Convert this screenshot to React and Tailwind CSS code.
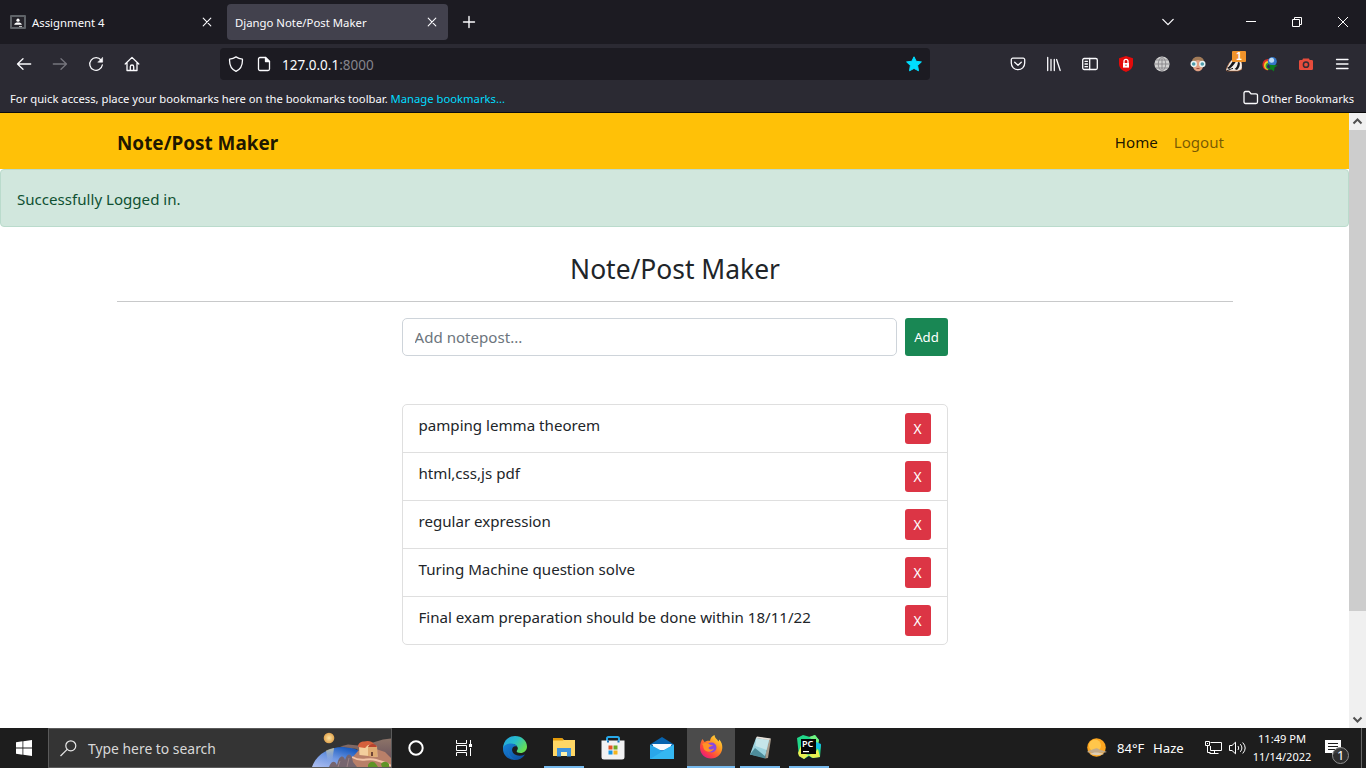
import React from "react";

const notes = [
  "pamping lemma theorem",
  "html,css,js pdf",
  "regular expression",
  "Turing Machine question solve",
  "Final exam preparation should be done within 18/11/22",
];

function Line({ className = "h-4 w-4", children, width = 1.3, stroke = "#fbfbfe" }) {
  return (
    <svg viewBox="0 0 16 16" className={className} fill="none" stroke={stroke} strokeWidth={width} strokeLinecap="round" strokeLinejoin="round">
      {children}
    </svg>
  );
}

function Close() {
  return (
    <Line className="h-4 w-4 shrink-0" width={1.1}>
      <path d="M4.2 4.2l7.6 7.6M11.8 4.2l-7.6 7.6" />
    </Line>
  );
}

function TabStrip() {
  return (
    <div className="flex h-11 items-center bg-[#1c1b22] text-[11.35px] text-[#fbfbfe]">
      <div className="flex h-9 w-[227px] items-center pl-[10px] pr-3">
        <svg viewBox="0 0 16 14" className="h-[14px] w-4">
          <rect width="16" height="14" rx="1" fill="#5f6368" />
          <rect x="2" y="2" width="12" height="10" fill="#25242b" />
          <circle cx="8" cy="5.2" r="1.6" fill="#fff" />
          <path d="M4.2 9.8c0-1.8 2-2.4 3.8-2.4s3.8.6 3.8 2.4z" fill="#fff" />
          <path d="M9 11h3v1H9z" fill="#bbb" />
        </svg>
        <span className="ml-[6px] flex-1 pt-px">Assignment 4</span>
        <Close />
      </div>
      <div className="flex h-9 w-[221px] items-center rounded-[4px] bg-[#42414d] pl-2 pr-2">
        <span className="flex-1 pt-px">Django Note/Post Maker</span>
        <Close />
      </div>
      <Line className="ml-[13px] h-4 w-4" width={1.4}>
        <path d="M8 2.5v11M2.5 8h11" />
      </Line>
      <Line className="ml-auto h-4 w-4">
        <path d="M2.8 5.4L8 10.6l5.2-5.2" />
      </Line>
      <svg viewBox="0 0 10 10" className="ml-[70px] h-[10px] w-[10px]">
        <path d="M0 4.5h10" stroke="#fff" fill="none" />
      </svg>
      <svg viewBox="0 0 10 10" className="ml-9 h-[10px] w-[10px]" fill="none" stroke="#fff">
        <path d="M.5 2.5h7v7h-7zM2.5 2.500v-2h7v7h-2" />
      </svg>
      <svg viewBox="0 0 10 10" className="ml-9 mr-[18px] h-[10px] w-[10px]" fill="none" stroke="#fff">
        <path d="M0 0l10 10M10 0L0 10" />
      </svg>
    </div>
  );
}

function Toolbar() {
  return (
    <div className="flex h-10 items-center bg-[#2b2a33] text-[13.5px]">
      <div className="flex w-[220px] items-center gap-5 pl-4">
        <Line>
          <path d="M14.700 8H1.500M7 2.800L1.500 8 7 13.200" />
        </Line>
        <Line stroke="#76757d">
          <path d="M1.300 8h13.200M9 2.800L14.500 8 9 13.200" />
        </Line>
        <Line>
          <path d="M13.100 4.200A6.300 6.300 0 1 0 14.300 9" />
          <path d="M14.600 1.700v4.500h-4.500z" fill="#fbfbfe" strokeWidth=".6" />
        </Line>
        <Line>
          <path d="M1.200 8L8 1.400 14.800 8M3 6.500V14.500h10V6.500M6.300 14.300v-3.600a1.700 1.700 0 0 1 3.400 0v3.600" />
        </Line>
      </div>
      <div className="flex h-8 w-[710px] items-center rounded-[4px] bg-[#1c1b22] px-2">
        <Line>
          <path d="M8 .9c2.200 1.500 4.200 2 6.400 2.200.4 5.800-1.800 10.300-6.400 12.300C3.400 13.400 1.200 8.900 1.600 3.100 3.800 2.900 5.800 2.400 8 .9z" />
        </Line>
        <Line className="ml-3 h-4 w-4">
          <path d="M4 1.500h5.500l4 4V13a1.500 1.500 0 0 1-1.500 1.500H4A1.500 1.500 0 0 1 2.500 13V3A1.500 1.500 0 0 1 4 1.500z" />
          <path d="M9.500 1.500v4h4z" fill="#fbfbfe" />
        </Line>
        <span className="ml-[10px] flex-1 pt-[2px] text-[#fbfbfe]">
          127.0.0.1<span className="text-[#85848c]">:8000</span>
        </span>
        <svg viewBox="0 0 16 16" className="h-4 w-4">
          <path d="M8 .8l2.200 4.500 5.200.6-3.800 3.600.9 5.300L8 12.400l-4.500 2.400.9-5.300L.6 5.900l5.200-.6z" fill="#00ddff" stroke="#00ddff" strokeLinejoin="round" />
        </svg>
      </div>
      <div className="ml-auto flex items-center gap-5 pr-4">
        <Line>
          <path d="M2.800 2.200h10.400a1.500 1.500 0 0 1 1.500 1.500V7c0 4-3 6.700-6.700 6.700S1.300 11 1.300 7V3.700a1.500 1.500 0 0 1 1.500-1.500zM4.700 6.200L8 9.300l3.300-3.100" />
        </Line>
        <Line>
          <path d="M1.700 1.500v13M5 3.500v11M8.300 3.500v11M10.600 3.500l3.600 11" />
        </Line>
        <Line>
          <rect x=".7" y="2.500" width="14.600" height="11" rx="1.500" />
          <path d="M7.700 2.500v11M3 5.300h2.500M3 8h2.500M3 10.700h2.500" />
        </Line>
        <svg viewBox="0 0 16 16" className="h-4 w-4">
          <path d="M8 0l7 2.200v5.600c0 4.200-3 6.800-7 8.200-4-1.400-7-4-7-8.200V2.200z" fill="#e30b0b" />
          <rect x="5" y="7" width="6" height="4.600" fill="#fff" />
          <path d="M6 7V5.300a2 2 0 0 1 4 0V7" fill="none" stroke="#fff" strokeWidth="1.300" />
          <path d="M8 8.500v1.500" stroke="#e30b0b" />
        </svg>
        <svg viewBox="0 0 16 16" className="h-4 w-4">
          <circle cx="8" cy="8" r="7.600" fill="#d0d0d0" />
          <path d="M8 .5v15M.5 8h15M2 4h12M2 12h12M8 .5C3 4 3 12 8 15.500M8 .5c5 3.500 5 11.500 0 15" fill="none" stroke="#807f84" strokeWidth=".8" />
        </svg>
        <svg viewBox="0 0 16 16" className="h-4 w-4">
          <path d="M2.500 8.500C2 4 4 1 8 1s6 3 5.500 7.500c-.4 4-2.400 6.800-5.500 6.800s-5.100-2.800-5.500-6.800z" fill="#e0a184" />
          <path d="M2 7C1.500 3 4 .7 8 .7S14.500 3 14 7l-2.500-2L8 4 4.500 5z" fill="#a17b58" />
          <circle cx="3.700" cy="8" r="2.500" fill="#4c9baa" stroke="#e8f3f3" strokeWidth="1.400" />
          <circle cx="12.300" cy="8" r="2.500" fill="#4c9baa" stroke="#e8f3f3" strokeWidth="1.400" />
          <path d="M6.500 12.500h3" stroke="#a34a40" />
        </svg>
        <div className="relative h-4 w-4">
          <svg viewBox="0 0 16 16" className="h-4 w-4">
            <path d="M0 13.500C2 9 4 5 7 3l8 2c1.500 3 1.600 6 .5 8.500L12 15H1z" fill="#f3eee8" stroke="#b5622d" strokeWidth=".6" />
            <path d="M1 12c2.500-1 4-4.500 6.500-7.500l2.500 1C8 8.500 6 11.500 3 13zM8.500 13c2-1 3-3.500 3.500-7l1.800.5c.3 3-.8 6-2.800 7.500z" fill="#17161a" />
            <path d="M1 14.500c3-.5 4-2 6-2" stroke="#17161a" fill="none" />
          </svg>
          <span className="absolute -top-[5px] left-[6px] flex h-[11px] w-[14px] items-center justify-center rounded-[1px] bg-[#f0932b] font-['Liberation_Sans',sans-serif] text-[10px] leading-none font-bold text-white">1</span>
        </div>
        <svg viewBox="0 0 16 16" className="h-4 w-4">
          <path d="M.5 9C.500 5 3 3 7 3L8.500 7 5.500 14.500C2.500 14 .5 12 .5 9z" fill="#dd3026" />
          <path d="M2 9.500C2 6.500 4 4.800 7.500 4.800l1.500 4-3 5.400C3.500 13.500 2 12 2 9.500z" fill="#f3ce24" />
          <path d="M3.500 10C3.500 7.500 5.500 6.300 8 6.300l1 4-2.500 3.400C4.500 13 3.500 12 3.500 10z" fill="#2e9e3b" />
          <path d="M5 10.500C5 8.500 7 7.800 9 7.800v3l-2 2c-1.500-.8-2-1.300-2-2.300z" fill="#2c2c60" />
          <circle cx="10.300" cy="5.500" r="4.500" fill="#3477c9" />
          <circle cx="9.600" cy="4.300" r="2.500" fill="#bedcf4" />
          <path d="M6.500 8.500L15.800 9.500 12.500 11.500l-.5 4L9.500 13.500l-4 .5 3-2.800z" fill="#0b7f1c" />
        </svg>
        <svg viewBox="0 0 16 16" className="h-4 w-4">
          <path d="M5 2.500h6l.7 1.500h2A1.300 1.300 0 0 1 15 5.300v7.400a1.300 1.300 0 0 1-1.300 1.300H2.300A1.300 1.300 0 0 1 1 12.700V5.300A1.300 1.300 0 0 1 2.300 4h2z" fill="#e74c3c" />
          <circle cx="8" cy="8.700" r="2.600" fill="none" stroke="#332d35" strokeWidth="1.500" />
        </svg>
        <Line>
          <path d="M2.500 3.500h11.500M2.500 8h11.500M2.500 12.500h11.500" />
        </Line>
      </div>
    </div>
  );
}

function Bookmarks() {
  return (
    <div className="flex h-[29px] items-center border-b border-[#0c0c0d] bg-[#2b2a33] pr-3 pl-[10px] text-[11.25px] whitespace-pre text-[#fbfbfe]">
      <span className="pt-[2px]">For quick access, place your bookmarks here on the bookmarks toolbar. </span>
      <span className="pt-[2px] text-[#00ddff]">Manage bookmarks...</span>
      <Line className="mr-[3px] ml-auto h-4 w-4">
        <path d="M2.500 1.500h3.500l2 2.300h5a1.500 1.500 0 0 1 1.500 1.500v6.700A1.500 1.500 0 0 1 13 13.500H2.500A1.500 1.500 0 0 1 1 12v-9A1.500 1.500 0 0 1 2.500 1.500z" />
      </Line>
      <span className="pt-[2px] text-[11.1px]">Other Bookmarks</span>
    </div>
  );
}

function Page() {
  return (
    <main className="flex-1 bg-white text-[15.1px] leading-6 text-[#212529]">
      <nav className="flex h-14 items-center justify-between bg-[#ffc107] pr-[125px] pl-[117px]">
        <span className="pt-1 text-[18.9px] font-bold text-black/90">Note/Post Maker</span>
        <span className="flex gap-4 pt-[2px]">
          <span className="text-black/90">Home</span>
          <span className="text-black/55">Logout</span>
        </span>
      </nav>
      <div className="flex h-[58px] items-center rounded-[4px] border border-[#badbcc] bg-[#d1e7dd] px-4 pt-[2px] text-[#0f5132]">Successfully Logged in.</div>
      <div className="pr-[116px] pl-[117px]">
        <h1 className="mt-6 h-[51px] border-b border-[#c8c9ca] pt-px text-center text-[26.4px] leading-[34px]">Note/Post Maker</h1>
      </div>
      <div className="mx-auto mt-4 w-[546px]">
        <div className="flex h-[38px] gap-2">
          <input className="min-w-0 flex-1 rounded-[5px] border border-[#ced4da] px-3 outline-none placeholder:text-[#6c757d]" placeholder="Add notepost..." />
          <button className="w-[43px] rounded-[3px] bg-[#198754] pl-px text-[13.2px] text-white">Add</button>
        </div>
        <ul className="mt-12 rounded-[5px] border border-[#dfdfdf]">
          {notes.map((n, i) => (
            <li key={n} className={i === notes.length - 1 ? "flex h-[47px] items-start justify-between px-4 pt-2" : "flex h-12 items-start justify-between border-b border-[#dfdfdf] px-4 pt-2"}>
              <span>{n}</span>
              <button className="h-[31px] w-[26px] rounded-[3px] bg-[#dc3545] text-[13.8px] text-white">X</button>
            </li>
          ))}
        </ul>
      </div>
    </main>
  );
}

function Scrollbar() {
  return (
    <div className="flex w-[17px] flex-col items-center bg-[#f0f0f0]">
      <svg viewBox="0 0 17 17" className="h-[17px] w-[17px]" fill="none" stroke="#505050" strokeWidth="2">
        <path d="M4.500 10.500l4-4 4 4" />
      </svg>
      <div className="h-[481px] w-full bg-[#cdcdcd]" />
      <svg viewBox="0 0 17 17" className="mt-auto h-[17px] w-[17px]" fill="none" stroke="#505050" strokeWidth="2">
        <path d="M4.500 6.500l4 4 4-4" />
      </svg>
    </div>
  );
}

function SearchArt() {
  return (
    <svg viewBox="0 0 80 38" className="h-[38px] w-20 shrink-0">
      <defs>
        <linearGradient id="sea" x1="0" x2="1" y1="1" y2="0">
          <stop offset="0" stopColor="#b0bfef" />
          <stop offset=".4" stopColor="#6f97e2" />
          <stop offset=".75" stopColor="#1b5cc0" />
          <stop offset="1" stopColor="#104fb4" />
        </linearGradient>
        <linearGradient id="hill" x1="0" x2="0" y1="0" y2="1">
          <stop offset="0" stopColor="#8d7468" />
          <stop offset="1" stopColor="#5d4659" />
        </linearGradient>
        <linearGradient id="glow" x1="0" x2="0" y1="0" y2="1">
          <stop offset="0" stopColor="#e9dca0" />
          <stop offset="1" stopColor="#8eabe4" stopOpacity="0" />
        </linearGradient>
        <radialGradient id="moon">
          <stop offset="0" stopColor="#ffe3a0" />
          <stop offset="1" stopColor="#dfa24d" />
        </radialGradient>
      </defs>
      <path d="M1 38C5 26 17 18 32 18c15 0 27 8 31 20z" fill="url(#sea)" />
      <path d="M15 21.500q4-2 8-2.500l-2 15h-4z" fill="url(#glow)" opacity=".75" />
      <circle cx="18" cy="9" r="5.300" fill="url(#moon)" />
      <path d="M29 17.500l8-2 10 1 15-3 10-3 8-1v29H56L46 20z" fill="url(#hill)" />
      <path d="M40 30l7-8 15-3 12 4 6 6v9H42z" fill="#b98069" />
      <path d="M41 28c10 6 15 0 24 3s10 2 15 6" fill="none" stroke="#f2c4a8" strokeWidth="2" />
      <path d="M48 18l7-4 11 3 .5 11-18-2z" fill="#f3cf9d" />
      <path d="M57 18h9v10l-9-1z" fill="#dfaa72" />
      <path d="M47 18c0-4 3-5.500 6-5.500 3-1 8-1 10 2.500l-6 1-3 3z" fill="#d5603c" />
      <path d="M57 18c1-4 8-4 9 0z" fill="#b9432e" />
      <path d="M60 23h2v4h-2z" fill="#704437" />
      <path d="M18 38c2-6 6-7 8-2 2-11 7-10 8-5 3-9 7-6 8 2l4 5z" fill="#76656f" />
      <path d="M27 38l2-6M36 38l2-9" stroke="#9d8585" />
      <path d="M57 36c2-4 6-4 8-1l2 3H57zM70 35c2-3 6-3 8 0v3h-7z" fill="#5f9426" />
    </svg>
  );
}

function TaskButton({ width = "w-10", active = false, children }) {
  return (
    <div className={`${width} flex h-10 shrink-0 items-center justify-center border-b-2 border-[#76b9ed] ${active ? "bg-[#4b4b4b]" : ""}`}>
      {children}
    </div>
  );
}

function Taskbar() {
  return (
    <footer className="flex h-10 items-center bg-[#1d1d1d] text-white">
      <div className="flex w-12 shrink-0 justify-center">
        <svg viewBox="0 0 16 16" className="h-4 w-4">
          <path d="M0 2.200L6.500 1.300v6.300H0zM7.300 1.200L16 0v7.600H7.300zM0 8.400h6.500v6.300L0 13.800zM7.300 8.400H16V16l-8.700-1.200z" fill="#fff" />
        </svg>
      </div>
      <div className="flex h-10 w-[344px] shrink-0 items-center border border-[#5a5a5a] bg-[#343434] pl-[11px] text-[13.900px] text-[#d8d8d8]">
        <svg viewBox="0 0 17 17" className="h-[17px] w-[17px]" fill="none" stroke="#e8e8e8" strokeWidth="1.200">
          <circle cx="10.800" cy="5.800" r="5" />
          <path d="M7.200 9.300L.5 16" />
        </svg>
        <span className="ml-[11px] flex-1 pt-[2px]">Type here to search</span>
        <SearchArt />
      </div>
      <div className="flex w-12 shrink-0 justify-center">
        <svg viewBox="0 0 16 16" className="h-4 w-4">
          <circle cx="8" cy="8" r="6.700" fill="none" stroke="#fff" strokeWidth="2" />
        </svg>
      </div>
      <div className="flex w-12 shrink-0 justify-center">
        <svg viewBox="0 0 16 16" className="h-4 w-4" fill="none" stroke="#fff">
          <path d="M.5 0v3.500h10V0M.5 16v-3.500h10V16M.5 5.500h10v5H.5zM14.500 0v4M14.500 8v8" />
          <path d="M13 4h3v3h-3z" fill="#fff" stroke="none" />
        </svg>
      </div>
      <div className="ml-[3px] flex w-12 shrink-0 justify-center">
        <svg viewBox="0 0 24 24" className="h-6 w-6">
          <defs>
            <linearGradient id="edgeTop" x1="0" y1="0" x2="1" y2=".6">
              <stop offset="0" stopColor="#259fe2" />
              <stop offset=".5" stopColor="#27bdcb" />
              <stop offset="1" stopColor="#67df52" />
            </linearGradient>
            <linearGradient id="edgeLow" x1="0" y1="0" x2="1" y2="1">
              <stop offset="0" stopColor="#1784d8" />
              <stop offset="1" stopColor="#0d4b9c" />
            </linearGradient>
          </defs>
          <path d="M.2 10C1.500 3.500 6.500 0 12 0c7 0 12 5 12 10.500 0 4-3 6.500-6.500 6.500-3 0-4.500-1.200-3.500-2.500 2.500-3-1-6.500-5-6.500C4.500 8 1.500 10.500 0 14z" fill="url(#edgeTop)" />
          <path d="M0 13c0-3 3.500-5.500 8-5.500 3 0 5.200 1.200 6 3-3-1.300-5.500 1-4.800 4.300.8 4 6 6.500 12.800 3.700C19.500 22.200 16 24 12 24 5 24 0 19 0 13z" fill="url(#edgeLow)" />
          <path d="M7.500 10c-4 4-1.500 11 5 13.800C5 23 2 15 7.500 10z" fill="#1671c6" />
        </svg>
      </div>
      <div className="ml-[5px] flex gap-[9px]">
        <TaskButton>
          <svg viewBox="0 0 22 19" className="h-[19px] w-[22px]">
            <path d="M0 0h9l2 2h11v16H0z" fill="#ffd765" />
            <path d="M0 0h9l1.500 2.500H0z" fill="#e49b0a" />
            <path d="M4 10h14v8.500h-4V14H8v4.500H4z" fill="#3f93dc" />
            <path d="M8 14h6v4H8z" fill="#fff0a8" />
          </svg>
        </TaskButton>
        <div className="flex h-10 w-10 items-center justify-center">
          <svg viewBox="0 0 24 24" className="h-6 w-6">
            <path d="M6 6V2.500A1.500 1.500 0 0 1 7.500 1h9A1.500 1.500 0 0 1 18 2.500V6" fill="none" stroke="#28a9ea" strokeWidth="2" />
            <path d="M.500 4.500h23V21a2.500 2.500 0 0 1-2.500 2.500h-18A2.500 2.500 0 0 1 .5 21z" fill="#f2f2f3" />
            <path d="M6 4.500h2v2H6zM16.500 4.500h2v2h-2z" fill="#1577bd" />
            <path d="M7.500 9.500h4v4h-4z" fill="#e65426" />
            <path d="M12.500 9.500h4v4h-4z" fill="#6eab24" />
            <path d="M7.500 14.500h4v4h-4z" fill="#1697e5" />
            <path d="M12.500 14.500h4v4h-4z" fill="#f5b51e" />
          </svg>
        </div>
        <div className="flex h-10 w-10 items-center justify-center">
          <svg viewBox="0 0 24 22" className="h-[22px] w-6">
            <path d="M0 7.500L12 0l12 7.500L12 15z" fill="#0763ae" />
            <path d="M3 7h18v6H3z" fill="#f8fbff" />
            <path d="M0 7.500L12 14l12-6.500V22H0z" fill="#2aa7ea" />
            <path d="M1.500 7h21L12 13.500z" fill="#f8fbff" />
            <path d="M0 22L24 7.500V22z" fill="#35b7f1" />
          </svg>
        </div>
      </div>
      <div className="ml-[5px] flex">
        <TaskButton width="w-12" active>
          <svg viewBox="0 0 24 24" className="h-6 w-6">
            <defs>
              <linearGradient id="fox" x1="1" y1="0" x2=".2" y2="1">
                <stop offset="0" stopColor="#fff44f" />
                <stop offset=".4" stopColor="#ff9b20" />
                <stop offset=".75" stopColor="#ff453d" />
                <stop offset="1" stopColor="#e31587" />
              </linearGradient>
            </defs>
            <path d="M3.500 4l2 3C8 5.500 10 5.500 11 6c.2-3 2-5 4.500-6 .2 3 2.500 4 4 6.500l.8-2C22.500 7 23.500 10 23.300 13c-.5 6-5 10.500-11.300 10.500S1 19 1 12.500C1 9 2 6 3.500 4z" fill="url(#fox)" />
            <circle cx="12.500" cy="12.500" r="5" fill="#8949df" />
            <path d="M3 9c3-2 6-1 8 .5 1 1 2 .5 3 .5-1 2-4 1-4.500 3 1 2 4 2 5.500 0-1 5-9 5-10.500 0-.5-2 0-3-1.500-4z" fill="#ff9225" />
          </svg>
        </TaskButton>
      </div>
      <div className="ml-[5px] flex gap-[9px]">
        <TaskButton>
          <svg viewBox="0 0 23 23" className="h-[23px] w-[23px]">
            <path d="M7 1l15 2-3 19-3 .5L19 5z" fill="#a79b8b" />
            <path d="M7 2l13 2-4 17.500-15-3z" fill="#9bd2dd" />
            <path d="M7 2l13 2-2.500 10-11-4z" fill="#c5e5e9" />
            <path d="M1 18.500L6 12l10.500 8.500-.5 2z" fill="#4d8c9a" />
            <path d="M7 2l1-1.500 14 2L20 4z" fill="#e7e3dc" />
          </svg>
        </TaskButton>
        <TaskButton>
          <svg viewBox="0 0 24 24" className="h-6 w-6">
            <path d="M0 3l6-3 7 2 5-2 4 5-2 4 4 1-1 12-8 1-3-2-5 3-5-3z" fill="#21d789" />
            <path d="M12 2l6-2 4 5-1 7-4-6z" fill="#70f17f" />
            <path d="M1 18L5 8v10l7 2-5 4-5-3zM17 18l4-4 2 8-7 1-5-3z" fill="#e9ef51" />
            <path d="M19 7l5 2-1 6-4-2z" fill="#12bfe5" />
            <path d="M4 4h15v15H4z" fill="#050505" />
            <text x="5" y="12" fill="#fff" fontFamily="Noto Sans" fontSize="9" fontWeight="600">PC</text>
            <path d="M6 16h6v1.200H6z" fill="#fff" />
          </svg>
        </TaskButton>
      </div>
      <div className="ml-auto flex items-center">
        <svg viewBox="0 0 22 20" className="h-5 w-[22px]">
          <circle cx="10.500" cy="9.500" r="9.300" fill="#fca51f" />
          <circle cx="9" cy="7.500" r="6" fill="#ffc64b" />
          <path d="M1 14c2-2 5-2 7-3 3-2 5 0 6 1 3 0 4 1 7 2-4 1-16 1.500-20 0z" fill="#c1aa8b" />
          <path d="M4 16c3-2 9-2 14 0-4 1.500-10 1.500-14 0z" fill="#ddceb6" />
        </svg>
        <span className="ml-[9px] w-[36px] pt-px text-[13.100px]">84°F</span>
        <span className="w-[52px] pt-px text-[13.200px]">Haze</span>
        <svg viewBox="0 0 17 14" className="h-[14px] w-[17px]" fill="none" stroke="#fff">
          <path d="M5.500 1.500h11v8h-11V5M4.500 12.500h9M9.500 9.500v3M2.500 5v6.500h3M.5.500h4v4h-4zM2.500 2v1" />
        </svg>
        <svg viewBox="0 0 18 14" className="ml-[7px] h-[14px] w-[18px]" fill="none" stroke="#fff">
          <path d="M.5 4.500h2.500l3.500-3.300v11.600L3 9.500H.5zM9 5q1.500 2 0 4M11.300 3.200q3.200 3.800 0 7.600M13.700 1.500q5 5.500 0 11" />
        </svg>
        <div className="ml-[2px] flex w-[66px] flex-col items-center text-[11.100px] leading-[18px]">
          <span>11:49 PM</span>
          <span className="text-[11px]">11/14/2022</span>
        </div>
        <div className="relative mt-[8px] ml-[10px] h-6 w-[25px]">
          <svg viewBox="0 0 25 24" className="h-6 w-[25px]">
            <path d="M0 0h16v13H10l-3 3v-3H0z" fill="#fff" />
            <path d="M3 3.500h10M3 6.500h10M3 9.500h7" stroke="#1d1d1d" />
            <circle cx="15.500" cy="15.500" r="8" fill="#303030" fillOpacity=".93" stroke="#909090" />
          </svg>
          <span className="absolute top-[8px] left-[12px] text-[13px] leading-[15px]">1</span>
        </div>
        <div className="ml-[11px] mr-1 h-10 w-px bg-[#666]" />
      </div>
    </footer>
  );
}

export default function App() {
  return (
    <div className="flex h-[768px] w-[1366px] flex-col overflow-hidden font-['Noto_Sans',sans-serif]">
      <TabStrip />
      <Toolbar />
      <Bookmarks />
      <div className="flex h-[615px]">
        <Page />
        <Scrollbar />
      </div>
      <Taskbar />
    </div>
  );
}
